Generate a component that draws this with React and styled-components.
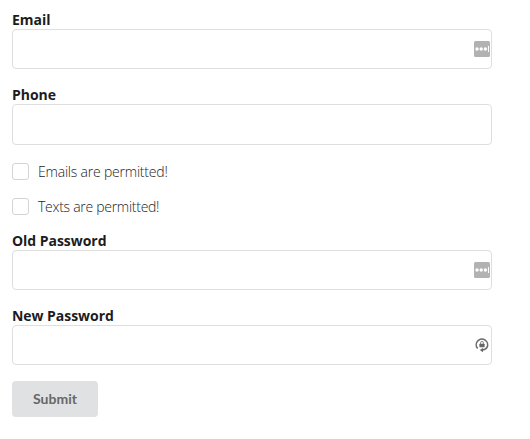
import React from "react";
import styled, { createGlobalStyle } from "styled-components";

const GlobalStyle = createGlobalStyle`
  * { box-sizing: border-box; }
  body { margin: 0; background: #fff; color: #212121; font-family: "Open Sans", "Noto Sans", sans-serif; }
`;

const Form = styled.form`
  width: 480px;
  margin: 10px 0 0 12px;
  display: flex;
  flex-direction: column;
`;

const Field = styled.div`
  display: flex;
  flex-direction: column;
  margin-bottom: ${(p) => p.$gap}px;
`;

const Label = styled.label`
  height: 19px;
  line-height: 19px;
  font-size: 14px;
  font-weight: 700;
  letter-spacing: -0.04px;
  color: #1c1c1d;
  white-space: nowrap;
`;

const InputFrame = styled.div`
  display: flex;
  align-items: center;
  height: ${(p) => p.$height || 40}px;
  padding-right: 1px;
  border: 1px solid #dededf;
  border-radius: 4px;
  background: #fff;
  svg { flex: none; display: block; }
`;

const Input = styled.input`
  flex: 1;
  min-width: 0;
  height: 100%;
  padding: 0 13px;
  border: 0;
  outline: 0;
  background: transparent;
  font: inherit;
`;

const CheckRow = styled.label`
  display: flex;
  align-items: center;
  gap: 9px;
  height: 17px;
  margin-bottom: ${(p) => p.$gap}px;
`;

const Box = styled.input`
  appearance: none;
  width: 17px;
  height: 17px;
  margin: 0;
  border: 1px solid #d4d4d5;
  border-radius: 3px;
  background: #fff;
`;

const CheckText = styled.span`
  font-size: 14px;
  font-weight: 330;
  line-height: 17px;
  letter-spacing: ${(p) => p.$spacing || 0}px;
  color: #1c1c1d;
  white-space: nowrap;
`;

const Submit = styled.button`
  width: 86px;
  height: 36px;
  padding: 0;
  border: 0;
  border-radius: 4px;
  background: #e0e1e2;
  color: #666768;
  font: 700 14px/36px Lato, sans-serif;
`;

const DotsIcon = () => (
  <svg width="16" height="16" viewBox="0 0 16 16">
    <rect width="16" height="16" rx="1.5" fill="#b2b2b2" />
    <circle cx="3" cy="8" r="1.7" fill="#fff" />
    <circle cx="7.2" cy="8" r="1.7" fill="#fff" />
    <circle cx="11.4" cy="8" r="1.7" fill="#fff" />
    <rect x="14" y="5" width="1" height="6" fill="#fff" />
  </svg>
);

const LockIcon = () => (
  <svg width="16" height="16" viewBox="0 0 16 16">
    <path d="M3.6 11.5A5.7 5.7 0 1 1 13 10.4Q11.7 12.8 8.4 12.8" fill="none" stroke="#6b6b6b" strokeWidth="1.6" />
    <path d="M9 10.9v4.3L5.8 12.9z" fill="#666" />
    <rect x="5.4" y="6.8" width="5.2" height="3.4" rx=".4" fill="#666" />
    <path d="M6.6 7V5.8a1.4 1.4 0 0 1 2.8 0V7" fill="none" stroke="#777" strokeWidth=".9" />
  </svg>
);

export default function App() {
  return (
    <>
      <GlobalStyle />
      <Form>
        <Field $gap={16}>
          <Label htmlFor="email">Email</Label>
          <InputFrame><Input id="email" /><DotsIcon /></InputFrame>
        </Field>
        <Field $gap={18}>
          <Label htmlFor="phone">Phone</Label>
          <InputFrame $height={41}><Input id="phone" /></InputFrame>
        </Field>
        <CheckRow $gap={18}><Box type="checkbox" /><CheckText $spacing={-0.21}>Emails are permitted!</CheckText></CheckRow>
        <CheckRow $gap={16}><Box type="checkbox" /><CheckText $spacing={-0.28}>Texts are permitted!</CheckText></CheckRow>
        <Field $gap={16}>
          <Label htmlFor="old">Old Password</Label>
          <InputFrame><Input id="old" type="password" /><DotsIcon /></InputFrame>
        </Field>
        <Field $gap={16}>
          <Label htmlFor="new">New Password</Label>
          <InputFrame><Input id="new" type="password" /><LockIcon /></InputFrame>
        </Field>
        <Submit type="button">Submit</Submit>
      </Form>
    </>
  );
}
